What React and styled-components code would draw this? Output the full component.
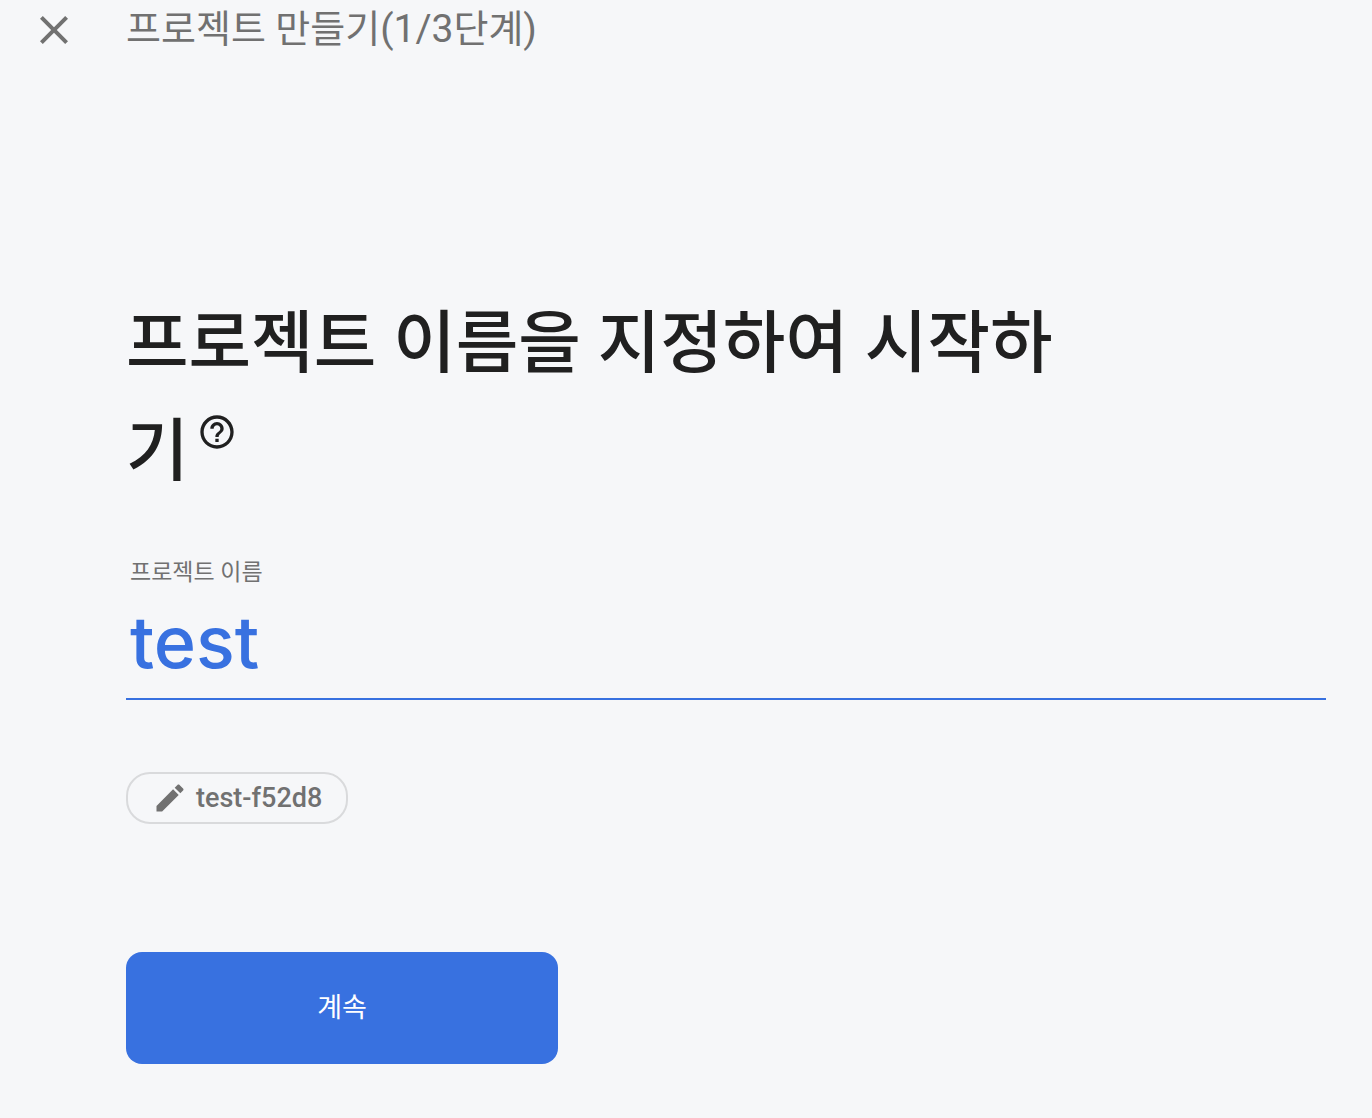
import React, { useState } from 'react';
import styled, { createGlobalStyle, ThemeProvider } from 'styled-components';

const theme = {
  color: {
    background: '#f6f7f9',
    primary: '#3871e0',
    grayBase: '#717171',
    grayLight: '#d9dadc',
    text: '#202020',
    white: '#ffffff',
  },
  font: 'Roboto, "Noto Sans CJK KR", sans-serif',
  fontInput: 'Inter, "Noto Sans CJK KR", sans-serif',
};

const GlobalStyle = createGlobalStyle`
  * {
    box-sizing: border-box;
  }

  body {
    margin: 0;
    background: ${props => props.theme.color.background};
    font-family: ${props => props.theme.font};
  }

  button,
  input {
    font-family: inherit;
  }
`;

const Header = styled.header`
  display: flex;
  align-items: center;
  gap: 48px;
  height: 60px;
  padding: 0 30px;
`;

const IconButton = styled.button`
  display: inline-flex;
  padding: 0;
  border: 0;
  background: none;
  color: ${props => props.color || 'inherit'};
  cursor: pointer;
`;

const Icon = styled.svg`
  display: block;
  flex: none;
  width: ${props => props.$size}px;
  height: ${props => props.$size}px;
  fill: currentColor;
`;

const StepTitle = styled.h2`
  margin: 0;
  padding-bottom: 2px;
  color: ${props => props.theme.color.grayBase};
  font-size: 38px;
  font-weight: 400;
  line-height: 56px;
`;

const StepCount = styled.span`
  font-size: 39px;
`;

const Form = styled.form`
  display: flex;
  flex-direction: column;
  align-items: flex-start;
  padding: 230px 46px 54px 126px;
`;

const Title = styled.h1`
  max-width: 960px;
  margin: 0;
  color: ${props => props.theme.color.text};
  font-size: 68px;
  font-weight: 500;
  line-height: 108px;
`;

const HelpButton = styled(IconButton)`
  margin-left: 8px;
  vertical-align: 23px;
`;

const Field = styled.div`
  display: flex;
  flex-direction: column;
  width: 100%;
  margin-top: 51px;
`;

const Label = styled.label`
  padding: 0 4px;
  color: ${props => props.theme.color.grayBase};
  font-size: 23px;
  line-height: 32px;
`;

const Input = styled.input`
  width: 100%;
  height: 111px;
  padding: 0 4px 4px;
  border: 0;
  border-bottom: 2px solid ${props => props.theme.color.primary};
  outline: none;
  background: none;
  color: ${props => props.theme.color.primary};
  font-family: ${props => props.theme.fontInput};
  font-size: 72px;
  font-weight: 500;
`;

const Chip = styled.button`
  display: flex;
  align-items: center;
  gap: 8px;
  height: 52px;
  margin-top: 72px;
  padding: 0 24px;
  border: 2px solid ${props => props.theme.color.grayLight};
  border-radius: 24px;
  background: none;
  color: ${props => props.theme.color.grayBase};
  font-size: 27px;
  font-weight: 500;
  cursor: pointer;
`;

const SubmitButton = styled.button`
  width: 432px;
  max-width: 100%;
  height: 112px;
  margin-top: 128px;
  padding: 0 0 6px;
  border: 0;
  border-radius: 16px;
  background: ${props => props.theme.color.primary};
  color: ${props => props.theme.color.white};
  font-size: 27px;
  font-weight: 400;
  cursor: pointer;
`;

const CloseIcon = () => (
  <Icon $size={48} viewBox="0 0 24 24" aria-hidden="true">
    <path d="M19 6.41L17.59 5 12 10.59 6.41 5 5 6.41 10.59 12 5 17.59 6.41 19 12 13.41 17.59 19 19 17.59 13.41 12z" />
  </Icon>
);

const HelpIcon = () => (
  <Icon $size={40} viewBox="0 0 24 24" aria-hidden="true">
    <path d="M11 18h2v-2h-2v2zm1-16C6.48 2 2 6.48 2 12s4.48 10 10 10 10-4.48 10-10S17.52 2 12 2zm0 18c-4.41 0-8-3.59-8-8s3.59-8 8-8 8 3.59 8 8-3.59 8-8 8zm0-14c-2.21 0-4 1.79-4 4h2c0-1.1.9-2 2-2s2 .9 2 2c0 2-3 1.75-3 5h2c0-2.25 3-2.5 3-5 0-2.21-1.79-4-4-4z" />
  </Icon>
);

const EditIcon = () => (
  <Icon $size={36} viewBox="0 0 24 24" aria-hidden="true">
    <path d="M3 17.25V21h3.75L17.81 9.94l-3.75-3.75L3 17.25zM20.71 7.04c.39-.39.39-1.02 0-1.41l-2.34-2.34c-.39-.39-1.02-.39-1.41 0l-1.83 1.83 3.75 3.75 1.83-1.83z" />
  </Icon>
);

const App = () => {
  const [name, setName] = useState('test');

  return (
    <ThemeProvider theme={theme}>
      <GlobalStyle />
      <Header>
        <IconButton type="button" aria-label="닫기" color={theme.color.grayBase}>
          <CloseIcon />
        </IconButton>
        <StepTitle>프로젝트 만들기<StepCount>(1/3</StepCount>단계<StepCount>)</StepCount></StepTitle>
      </Header>

      <Form onSubmit={e => e.preventDefault()}>
        <Title>
          프로젝트 이름을 지정하여 시작하기
          <HelpButton type="button" aria-label="도움말">
            <HelpIcon />
          </HelpButton>
        </Title>

        <Field>
          <Label htmlFor="project-name">프로젝트 이름</Label>
          <Input
            id="project-name"
            type="text"
            autoComplete="off"
            spellCheck={false}
            value={name}
            onChange={e => setName(e.target.value)}
          />
        </Field>

        <Chip type="button">
          <EditIcon />
          test-f52d8
        </Chip>

        <SubmitButton type="submit">계속</SubmitButton>
      </Form>
    </ThemeProvider>
  );
};

export default App;
